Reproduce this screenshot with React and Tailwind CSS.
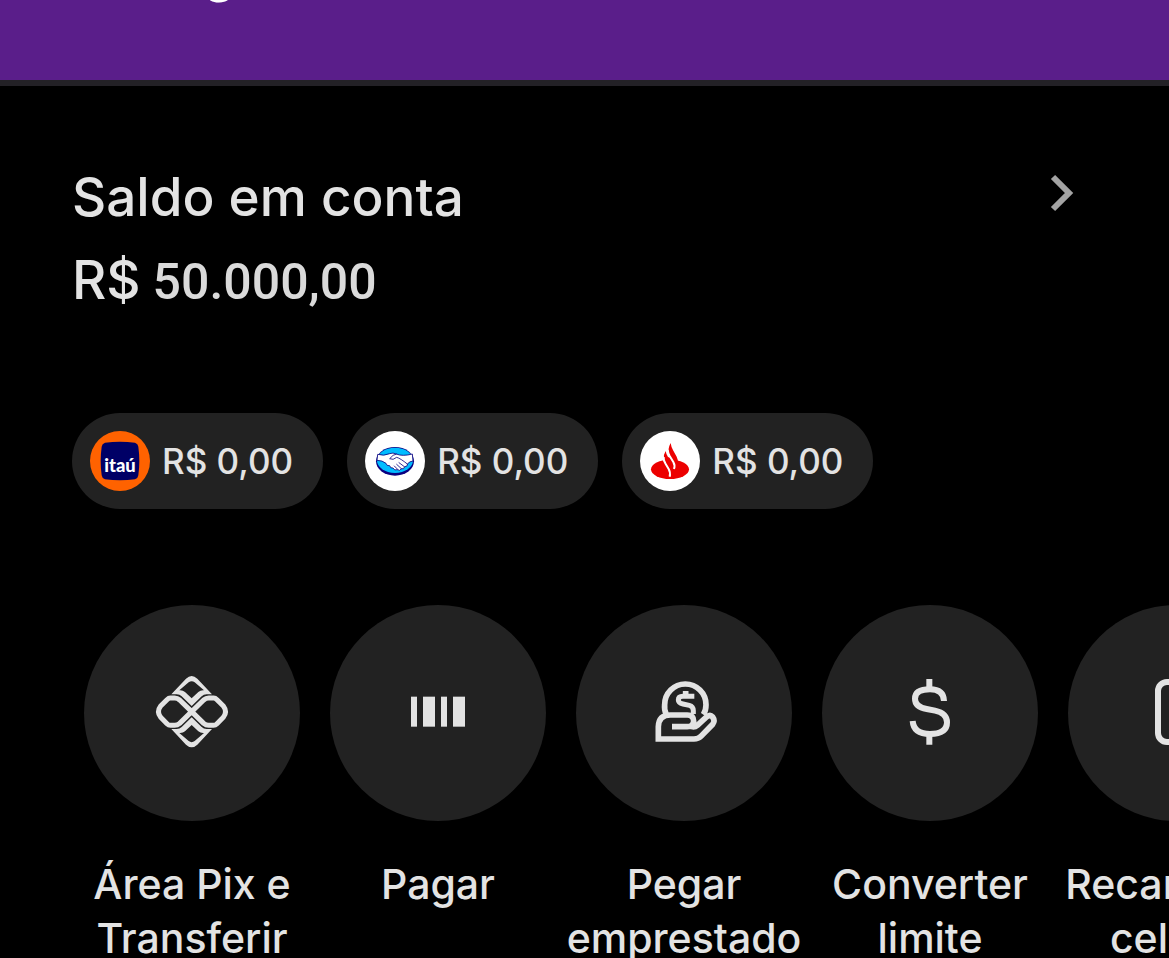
import React from 'react';

function ItauLogo() {
  return (
    <svg viewBox="0 0 180 180" className="size-15 rounded-full bg-[#ff6200]" aria-hidden="true">
      <path d="M45 35 Q90 29 135 35 Q144 38 145 47 Q151 90 145 133 Q144 142 135 145 Q90 151 45 145 Q36 142 35 133 Q29 90 35 47 Q36 38 45 35Z" fill="#000066" />
      <text x="90" y="124" textAnchor="middle" fontFamily="Lato, sans-serif" fontWeight="900" fontSize="55" fill="#fff">itaú</text>
    </svg>
  );
}

function MercadoPagoLogo() {
  return (
    <svg viewBox="0 0 180 180" className="size-15 rounded-full bg-white" aria-hidden="true">
      <ellipse cx="90" cy="91" rx="57" ry="43" fill="#0a0080" />
      <ellipse cx="90" cy="88" rx="54" ry="38" fill="#00bcff" />
      <path
        d="M38 70 Q56 76 74 68 Q84 64 94 69 Q112 77 142 69 L144 90 Q134 91 128 98 Q128 108 119 107 Q117 116 109 113 Q104 122 97 116 Q88 120 84 111 Q76 113 74 104 Q65 106 63 97 Q52 88 36 88Z"
        fill="#fff"
        stroke="#0a0080"
        strokeWidth="2.5"
        strokeLinejoin="round"
      />
      <path d="M94 69 Q84 70 74 83 Q84 89 95 79 Q106 82 127 99 M102 95 L118 107 M95 100 L109 113 M88 105 L98 115" fill="none" stroke="#0a0080" strokeWidth="2.5" strokeLinecap="round" />
    </svg>
  );
}

function SantanderLogo() {
  return (
    <svg viewBox="0 0 180 180" className="size-15 rounded-full bg-white" aria-hidden="true">
      <ellipse cx="90" cy="115" rx="57" ry="29" fill="#ec0000" />
      <path d="M92 36 Q93 47 100 59 L110 77 Q115 87 114 97 V112 H72 V84 Q70 70 77 60 Q78 68 84 78 L90 80 Q84 70 85 58 Q86 46 92 36Z" fill="#ec0000" />
      <path d="M83 56 Q84 66 89 75 L100 93 Q106 104 102 114" fill="none" stroke="#fff" strokeWidth="6" />
      <path d="M71 78 Q70 88 77 99 L86 114 Q92 124 89 137" fill="none" stroke="#fff" strokeWidth="6" />
    </svg>
  );
}

const ink = '#e3e3e3';

// top petal of the Pix mark, mirrored for the bottom
const petal =
  'M149 132 L119 103 Q113 97 104 97 H88 L132 50 Q149 34 166 50 L210 97 H194 Q185 97 179 103Z M149 109 L169 90 Q176 84 186 85 L158 61 Q149 54 140 61 L112 85 Q122 84 129 90Z';

function PixIcon() {
  return (
    <svg viewBox="0 3 300 300" className="size-25" aria-hidden="true">
      <path
        d="M149 149 L113 114 Q106 108 98 108 H85 Q80 108 75 113 L56 132 Q43 149 56 166 L75 185 Q80 190 85 190 H98 Q106 190 113 184 L149 149 L185 184 Q192 190 200 190 H215 Q220 190 225 185 L244 166 Q257 149 244 132 L225 113 Q220 108 215 108 H200 Q192 108 185 114Z"
        fill="none"
        stroke={ink}
        strokeWidth="15"
        strokeLinejoin="bevel"
      />
      <path d={petal} fill={ink} fillRule="evenodd" />
      <path d={petal} fill={ink} fillRule="evenodd" transform="matrix(1 0 0 -1 0 298)" />
    </svg>
  );
}

function BarcodeIcon() {
  return (
    <svg viewBox="-6 3 300 300" className="size-25" fill={ink} aria-hidden="true">
      <rect x="63" y="104" width="18" height="90" />
      <rect x="99" y="104" width="36" height="90" />
      <rect x="153" y="104" width="18" height="90" />
      <rect x="189" y="104" width="36" height="90" />
    </svg>
  );
}

function LoanIcon() {
  return (
    <svg viewBox="-6 3 300 300" className="size-25" fill="none" stroke={ink} strokeWidth="17" aria-hidden="true">
      <path d="M91 158 Q84 144 86 128 A62 62 0 0 1 210 128 Q210 146 202 158" />
      <path d="M175 103 H141 Q127 103 127 114 Q127 123 141 126 L160 130 Q172 133 172 146 V156" strokeWidth="15" />
      <path d="M149 87 V103" />
      <path d="M108 194 H154 Q171 194 173 178 Q173 159 154 159 H103 Q68 159 67 194 V231 H174 Q187 231 195 223 L230 187 Q238 176 230 165 Q222 156 210 166 L184 190 Q176 197 167 194" />
    </svg>
  );
}

function DollarIcon() {
  return (
    <svg viewBox="0 3 300 300" className="size-25" fill="none" stroke={ink} strokeWidth="18" aria-hidden="true">
      <path d="M192 117 Q191 82 150 82 Q105 82 105 110 Q105 135 140 141 L165 146 Q201 154 201 181 Q201 216 150 216 Q101 216 98 177" />
      <path d="M148 51 V82 M148 216 V248" />
    </svg>
  );
}

function PhoneIcon() {
  return (
    <svg viewBox="0 0 100 100" className="size-25" fill="none" stroke={ink} strokeWidth="6" aria-hidden="true">
      <rect x="32" y="19" width="36" height="60" rx="9" />
      <path d="M45 69 H55" />
    </svg>
  );
}

const accounts = [
  { bank: 'Itaú', Logo: ItauLogo },
  { bank: 'Mercado Pago', Logo: MercadoPagoLogo },
  { bank: 'Santander', Logo: SantanderLogo },
];

const actions = [
  { lines: ['Área Pix e', 'Transferir'], Icon: PixIcon },
  { lines: ['Pagar'], Icon: BarcodeIcon },
  { lines: ['Pegar', 'emprestado'], Icon: LoanIcon },
  { lines: ['Converter', 'limite'], Icon: DollarIcon },
  { lines: ['Recarga de', 'celular'], Icon: PhoneIcon },
];

export default function App() {
  return (
    <div className="h-screen overflow-hidden bg-black font-['Inter','Liberation_Sans',sans-serif] font-medium text-[#e3e3e3]">
      <header className="h-[86px] overflow-hidden border-b-6 border-[#232126] bg-[#5a1e8a] pl-[203px]">
        <div className="-mt-[54px] text-[53px] leading-[53px] text-white">g</div>
      </header>

      <main>
        <section className="flex items-start justify-between pt-[76px] pr-[79px] pl-[72px]">
          <div>
            <h1 className="text-[53px] leading-[70px]">Saldo em conta</h1>
            <p className="flex items-baseline gap-3 text-[53px] leading-[96px]">
              <span>R$</span>
              <span className="font-['Roboto','Liberation_Sans',sans-serif] text-[50px] text-[#dadada]">50.000,00</span>
            </p>
          </div>
          <button type="button" aria-label="Ver conta">
            <svg viewBox="0 0 60 60" className="size-15" fill="none" stroke="#a3a3a3" strokeWidth="6" aria-hidden="true">
              <path d="M23 15 L39 31 L23 47" />
            </svg>
          </button>
        </section>

        <section className="mt-[83px] flex gap-6 pl-[72px]">
          {accounts.map(({ bank, Logo }) => (
            <button key={bank} type="button" aria-label={bank} className="flex h-24 shrink-0 items-center gap-3 rounded-full bg-[#222222] pr-[30px] pl-[18px] text-[35px]">
              <Logo />
              <span>R$ 0,00</span>
            </button>
          ))}
        </section>

        <nav className="mt-24 flex pl-[69px]">
          {actions.map(({ lines, Icon }) => (
            <button key={lines[0]} type="button" className="flex w-[246px] shrink-0 flex-col items-center gap-9">
              <span className="flex size-54 items-center justify-center rounded-full bg-[#222222]">
                <Icon />
              </span>
              <span className="text-[41px] leading-[54px] whitespace-nowrap">
                {lines.map((line) => (
                  <span key={line} className="block">{line}</span>
                ))}
              </span>
            </button>
          ))}
        </nav>
      </main>
    </div>
  );
}
